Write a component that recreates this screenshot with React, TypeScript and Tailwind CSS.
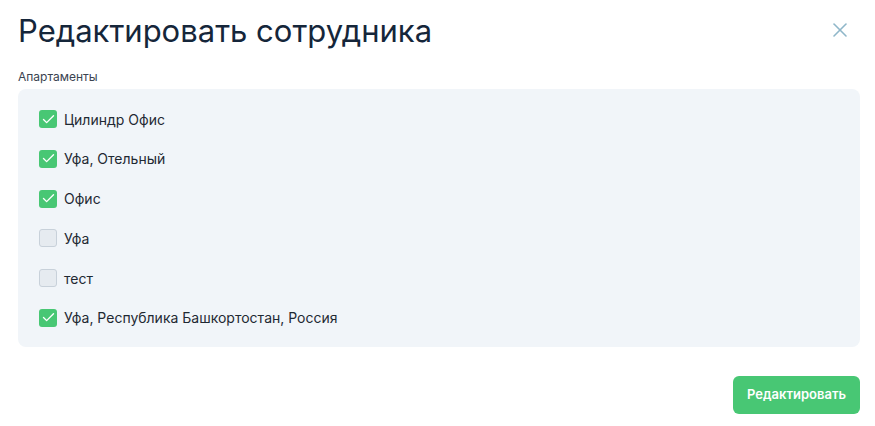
import { X, Check } from "lucide-react";

const apartments = [
  { name: "Цилиндр Офис", checked: true },
  { name: "Уфа, Отельный", checked: true },
  { name: "Офис", checked: true },
  { name: "Уфа", checked: false },
  { name: "тест", checked: false },
  { name: "Уфа, Республика Башкортостан, Россия", checked: true },
];

export default function App() {
  return (
    <div className="min-h-screen bg-white pl-[18px] pr-[15px] pt-[11px] font-['Inter',sans-serif]">
      <div className="flex items-start justify-between">
        <h1 className="text-[31px] leading-[40px] text-[#15263a] font-normal">
          Редактировать сотрудника
        </h1>
        <button className="mt-[7px] mr-[8px] text-[#8fb7c9]">
          <X size={24} strokeWidth={1.6} />
        </button>
      </div>

      <div className="mt-[18px] text-[12px] leading-[16px] text-[#3a4350]">Апартаменты</div>

      <div className="mt-[4px] rounded-lg bg-[#f1f5f9] px-[21px] pt-[21px] pb-[20px] flex flex-col gap-[21.8px]">
        {apartments.map((a) => (
          <label key={a.name} className="flex items-center gap-[7px] h-[18px]">
            {a.checked ? (
              <span className="w-[18px] h-[18px] rounded-[3px] bg-[#48c774] flex items-center justify-center text-white">
                <Check size={15} strokeWidth={2.2} />
              </span>
            ) : (
              <span className="w-[18px] h-[18px] rounded-[3px] bg-[#e6ebf0] border border-[#c8d1da]" />
            )}
            <span className="text-[14px] text-[#1f2933]">{a.name}</span>
          </label>
        ))}
      </div>

      <div className="flex justify-end mt-[29px]">
        <button className="h-[38px] px-[14px] rounded-md bg-[#48c774] text-white text-[13px] font-semibold">
          Редактировать
        </button>
      </div>
    </div>
  );
}
